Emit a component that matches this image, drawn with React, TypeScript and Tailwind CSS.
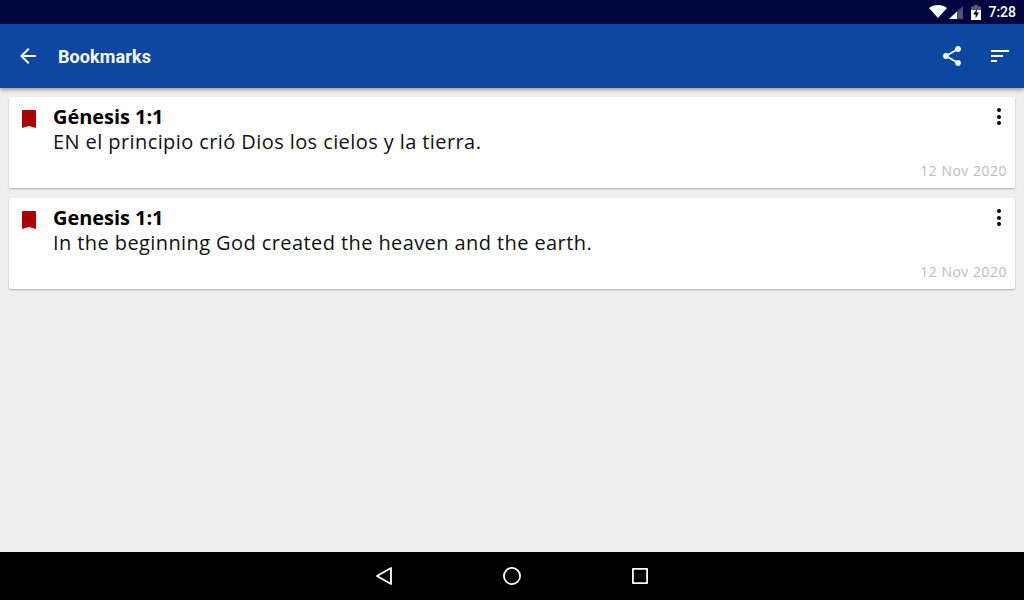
import React from 'react';

interface Bookmark {
  title: string;
  text: string;
  date: string;
}

const bookmarks: Bookmark[] = [
  { title: 'Génesis 1:1', text: 'EN el principio crió Dios los cielos y la tierra.', date: '12 Nov 2020' },
  { title: 'Genesis 1:1', text: 'In the beginning God created the heaven and the earth.', date: '12 Nov 2020' },
];

const StatusBar = () => (
  <div className="h-6 shrink-0 bg-[#00063f] flex items-center justify-end pr-2">
    <svg width="18" height="13" viewBox="0 0 18 13" className="mt-[-1px]">
      <path d="M0 3C2.4 1.1 5.5 0 9 0s6.6 1.1 9 3L9 13z" fill="#fff" />
    </svg>
    <svg width="14" height="13" viewBox="0 0 14 13" className="ml-[2px]">
      <path d="M0 13L14 0v13z" fill="#fff" fillOpacity="0.3" />
      <path d="M0 13L8 5.6V13z" fill="#fff" />
    </svg>
    <svg width="10" height="15" viewBox="0 0 10 15" className="ml-[8px]">
      <path d="M3 0h4v1.5h3V6H0V1.5h3z" fill="#fff" fillOpacity="0.35" />
      <path d="M0 5h10v10H0z" fill="#fff" />
      <path d="M6.4 3.5L2.2 9.5h2.4v4L8 7.6H5.6z" fill="#00063f" />
    </svg>
    <span className="ml-[7px] text-[14px] leading-none text-white font-medium font-['Roboto',sans-serif]">7:28</span>
  </div>
);

const AppBar = () => (
  <div className="h-16 shrink-0 bg-[#0d47a1] flex items-center shadow-[0_2px_4px_rgba(0,0,0,0.35)] z-10 relative">
    <svg width="24" height="24" viewBox="0 0 24 24" fill="#fff" className="ml-4">
      <path d="M20 11H7.83l5.59-5.59L12 4l-8 8 8 8 1.41-1.41L7.83 13H20z" />
    </svg>
    <span className="ml-[18px] text-[18px] font-bold tracking-[0.1px] text-white font-['Roboto',sans-serif]">Bookmarks</span>
    <div className="ml-auto flex items-center">
      <svg width="24" height="24" viewBox="0 0 24 24" fill="#fff">
        <path d="M18 16.08c-.76 0-1.44.3-1.96.77L8.91 12.7c.05-.23.09-.46.09-.7s-.04-.47-.09-.7l7.05-4.11c.54.5 1.25.81 2.04.81 1.66 0 3-1.34 3-3s-1.34-3-3-3-3 1.34-3 3c0 .24.04.47.09.7L8.04 9.81C7.5 9.31 6.79 9 6 9c-1.66 0-3 1.34-3 3s1.34 3 3 3c.79 0 1.5-.31 2.04-.81l7.12 4.16c-.05.21-.08.43-.08.65 0 1.61 1.31 2.92 2.92 2.92s2.92-1.31 2.92-2.92-1.31-2.92-2.92-2.92z" />
      </svg>
      <svg width="24" height="24" viewBox="0 0 24 24" fill="#fff" className="ml-6 mr-3">
        <path d="M3 18h6v-2H3v2zM3 6v2h18V6H3zm0 7h12v-2H3v2z" />
      </svg>
    </div>
  </div>
);

const BookmarkCard = ({ title, text, date }: Bookmark) => (
  <div className="h-[91px] bg-white rounded-[2px] shadow-[0_1px_2px_rgba(0,0,0,0.3)] flex font-['Open_Sans',sans-serif]">
    <svg width="14" height="18" viewBox="0 0 14 18" className="ml-[13px] mt-[13px] shrink-0">
      <path d="M0 1Q0 0 1 0h12Q14 0 14 1V18L7 16 0 18z" fill="#aa0000" />
    </svg>
    <div className="ml-[17px] flex-1 pt-[7px] min-w-0">
      <div className="text-[20px] leading-[25px] font-bold tracking-[-0.05px] text-black">{title}</div>
      <div className="text-[20px] leading-[25px] tracking-[0.41px] text-[#111]">{text}</div>
    </div>
    <div className="flex flex-col items-end pr-2 pt-[11px] pb-[9px]">
      <div className="flex flex-col gap-[2.5px] mr-[6px]">
        <span className="w-1 h-1 rounded-full bg-black" />
        <span className="w-1 h-1 rounded-full bg-black" />
        <span className="w-1 h-1 rounded-full bg-black" />
      </div>
      <div className="mt-auto text-[14px] leading-4 tracking-[0.5px] text-[#bdbdbd] whitespace-nowrap">{date}</div>
    </div>
  </div>
);

const NavBar = () => (
  <div className="h-12 shrink-0 bg-black flex items-center justify-center gap-[104px]">
    <svg width="24" height="24" viewBox="0 0 24 24" fill="none" stroke="#fff" strokeWidth="1.8" strokeLinejoin="round">
      <path d="M19 4v16L5 12z" />
    </svg>
    <svg width="24" height="24" viewBox="0 0 24 24" fill="none" stroke="#fff" strokeWidth="1.8">
      <circle cx="12" cy="12" r="8.1" />
    </svg>
    <svg width="24" height="24" viewBox="0 0 24 24" fill="none" stroke="#fff" strokeWidth="1.8" strokeLinejoin="round">
      <rect x="4.9" y="4.9" width="14.2" height="14.2" />
    </svg>
  </div>
);

export default function App() {
  return (
    <div className="w-[1024px] h-[600px] flex flex-col bg-[#efefef] overflow-hidden">
      <StatusBar />
      <AppBar />
      <div className="flex-1 flex flex-col gap-[10px] pt-[9px] px-[9px]">
        {bookmarks.map((b) => (
          <BookmarkCard key={b.title} {...b} />
        ))}
      </div>
      <NavBar />
    </div>
  );
}
